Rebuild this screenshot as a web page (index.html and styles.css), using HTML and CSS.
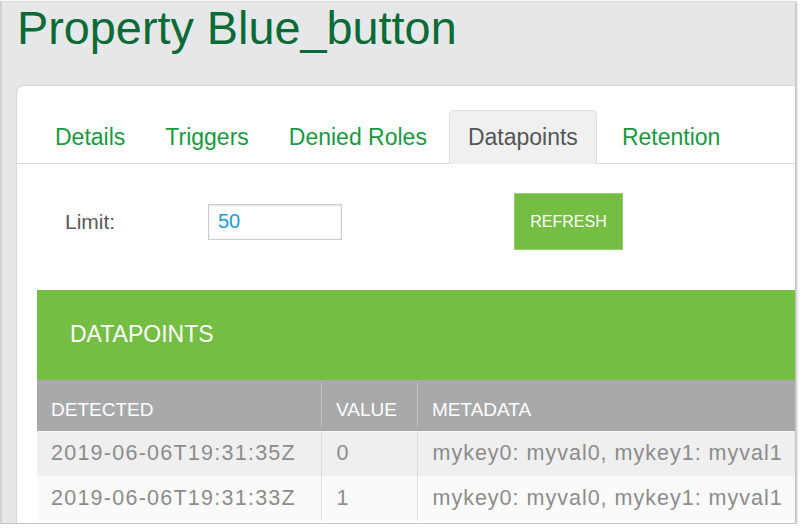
FILE: index.html
```html
<!DOCTYPE html>
<html>
<head>
<meta charset="utf-8">
<link rel="stylesheet" href="styles.css">
</head>
<body>
<div class="frame">
  <h1 class="title">Property Blue_button</h1>
  <div class="card">
    <ul class="tabs">
      <li class="tab">Details</li>
      <li class="tab">Triggers</li>
      <li class="tab">Denied Roles</li>
      <li class="tab active">Datapoints</li>
      <li class="tab">Retention</li>
    </ul>
    <div class="form-row">
      <label class="label">Limit:</label>
      <input class="limit" type="text" value="50">
      <button class="refresh">REFRESH</button>
    </div>
    <div class="panel">DATAPOINTS</div>
    <table class="grid">
      <thead>
        <tr><th class="c1">DETECTED</th><th class="c2">VALUE</th><th class="c3">METADATA</th></tr>
      </thead>
      <tbody>
        <tr class="odd"><td class="c1">2019-06-06T19:31:35Z</td><td class="c2">0</td><td class="c3">mykey0: myval0, mykey1: myval1</td></tr>
        <tr class="even"><td class="c1">2019-06-06T19:31:33Z</td><td class="c2">1</td><td class="c3">mykey0: myval0, mykey1: myval1</td></tr>
      </tbody>
    </table>
  </div>
</div>
</body>
</html>
```
FILE: styles.css
```css
html, body {
  margin: 0;
  padding: 0;
  background: #ffffff;
  font-family: "Liberation Sans", Arial, Helvetica, sans-serif;
}

.frame {
  box-sizing: border-box;
  width: 796px;
  height: 523px;
  margin: 1px 0 0 0;
  border: 1px solid #c4c4c4;
  border-top-color: #dcdcdc;
  border-left: 2px solid #cfcfcf;
  background: #e6e7e9;
  overflow: hidden;
  display: flex;
  flex-direction: column;
  box-shadow: 1px 1px 2px rgba(0, 0, 0, 0.25);
}

.title {
  box-sizing: border-box;
  margin: 0;
  height: 83px;
  padding: 0 0 0 15px;
  font-size: 46.8px;
  line-height: 52px;
  font-weight: normal;
  color: #0b6b36;
  flex: none;
}

.card {
  flex: 1;
  margin-left: 14px;
  background: #ffffff;
  border-top: 1px solid #d8d8d8;
  border-left: 1px solid #d8d8d8;
  border-top-left-radius: 8px;
  min-height: 0;
}

.tabs {
  list-style: none;
  margin: 24px 0 0 0;
  padding: 0 0 0 19px;
  display: flex;
  gap: 2px;
  height: 53px;
  border-bottom: 1px solid #dddddd;
}

.tab {
  box-sizing: border-box;
  height: 54px;
  padding: 0 18px;
  border: 1px solid transparent;
  border-bottom: none;
  border-radius: 5px 5px 0 0;
  font-size: 23px;
  line-height: 53px;
  color: #18993f;
}

.tab.active {
  background: #f0f0f0;
  border-color: #dcdcdc;
  color: #555555;
  margin-left: 1px;
  margin-right: 4px;
}

.form-row {
  display: flex;
  align-items: center;
  height: 57px;
  margin-top: 29px;
}

.label {
  width: 143px;
  padding-left: 48px;
  font-size: 21px;
  color: #5a5a5a;
}

.limit {
  box-sizing: border-box;
  width: 134px;
  height: 36px;
  margin: 0;
  padding: 0 0 0 9px;
  border: 1px solid #cccccc;
  box-shadow: inset 0 1px 2px rgba(0, 0, 0, 0.12);
  font-family: "Liberation Sans", Arial, sans-serif;
  font-size: 20px;
  color: #1b9ad6;
  outline: none;
}

.refresh {
  box-sizing: border-box;
  width: 109px;
  height: 57px;
  margin: 0 0 0 172px;
  padding: 0;
  background: #74be43;
  border: 1px solid #93cd70;
  color: #ffffff;
  font-family: "Liberation Sans", Arial, sans-serif;
  font-size: 16px;
}

.panel {
  margin: 40px 0 0 20px;
  height: 90px;
  padding-left: 33px;
  background: #74be43;
  color: #ffffff;
  font-size: 23px;
  line-height: 88px;
}

.grid {
  margin-left: 20px;
  width: calc(100% - 20px);
  border-collapse: collapse;
  table-layout: fixed;
}

.grid th {
  height: 51px;
  padding: 10px 0 0 0;
  background-color: #a8a9ab;
  background-image: linear-gradient(#c6c7c9, #c6c7c9);
  background-size: 1px 44px;
  background-position: left 3px;
  background-repeat: no-repeat;
  border-bottom: 1px solid #f4f4f4;
  color: #ffffff;
  font-size: 19px;
  font-weight: normal;
  text-align: left;
  box-sizing: border-box;
}

.grid th.c1 {
  background-image: none;
}

.grid .c1 {
  width: 284px;
  padding-left: 14px;
}

.grid .c2 {
  width: 96px;
  padding-left: 15px;
}

.grid .c3 {
  padding-left: 15px;
}

.grid td {
  height: 45px;
  padding-top: 0;
  padding-bottom: 0;
  font-size: 21.5px;
  letter-spacing: 1px;
  color: #8c8c8c;
  white-space: nowrap;
  box-sizing: border-box;
}

.grid td.c1 {
  letter-spacing: 1.25px;
}

.grid td.c2,
.grid td.c3 {
  border-left: 1px solid #dddddd;
}

.grid .odd td {
  background: #efefef;
}

.grid .even td {
  background: #fafafa;
}
```
